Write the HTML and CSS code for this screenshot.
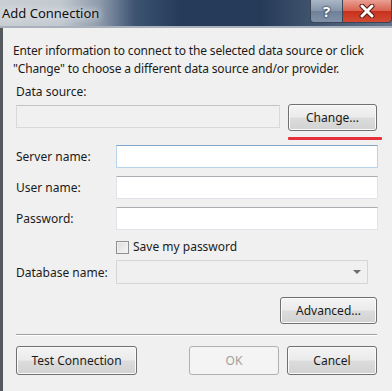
FILE: index.html
```html
<!DOCTYPE html>
<html>
   <head>
      <title>Add Connection</title>
      <link rel="stylesheet" href="styles.css">
   </head>
   <body>
      <div class="window">
         <div class="titlebar">
            <span class="title">Add Connection</span>
            <div class="caption-btns">
               <button class="cap-btn help">?</button>
               <button class="cap-btn close">
                  <svg width="16" height="14" viewBox="0 0 16 14">
                     <path d="M3 2 L13 12 M13 2 L3 12" stroke="#5a1a14" stroke-width="5" stroke-linecap="round"/>
                     <path d="M3 2 L13 12 M13 2 L3 12" stroke="#ffffff" stroke-width="3" stroke-linecap="round"/>
                  </svg>
               </button>
            </div>
         </div>
         <div class="content">
            <p class="intro">Enter information to connect to the selected data source or click "Change" to choose a different data source and/or provider.</p>
            <div class="label-top">Data source:</div>
            <div class="source-row">
               <div class="field readonly"></div>
               <div class="change-wrap">
                  <button class="btn change">Change...</button>
                  <div class="mark"></div>
               </div>
            </div>
            <div class="form-row first">
               <label>Server name:</label>
               <div class="field focused"></div>
            </div>
            <div class="form-row">
               <label>User name:</label>
               <div class="field"></div>
            </div>
            <div class="form-row">
               <label>Password:</label>
               <div class="field"></div>
            </div>
            <div class="check-row">
               <span class="checkbox"></span>
               <span>Save my password</span>
            </div>
            <div class="form-row db">
               <label>Database name:</label>
               <div class="combo">
                  <span class="arrow"></span>
               </div>
            </div>
            <div class="advanced-row">
               <button class="btn advanced">Advanced...</button>
            </div>
            <div class="separator"></div>
            <div class="footer">
               <button class="btn test">Test Connection</button>
               <div class="footer-right">
                  <button class="btn ok" disabled>OK</button>
                  <button class="btn cancel">Cancel</button>
               </div>
            </div>
         </div>
      </div>
   </body>
</html>
```

FILE: styles.css
```css
* {
   margin: 0;
   padding: 0;
   box-sizing: border-box;
   font-family: 'Noto Sans', 'Open Sans', sans-serif;
}
body {
   width: 392px;
   height: 391px;
   overflow: hidden;
   background: #f0f0f0;
   color: #1b1b1b;
   font-size: 12px;
}
.window {
   height: 391px;
   display: flex;
   flex-direction: column;
}
.titlebar {
   height: 28px;
   display: flex;
   justify-content: space-between;
   align-items: flex-start;
   background: linear-gradient(to right, #c9ced3 0, #c2c9d0 60px, #8d9aab 100px, #3d5372 135px, #263b5a 180px, #263b59 260px, #3a4e68 300px, #63748a 392px);
   border-bottom: 2px solid #a9b2bc;
}
.title {
   font-size: 13px;
   line-height: 26px;
   padding-left: 2px;
   color: #101010;
   text-shadow: 0 0 6px #e8ecf0, 0 0 10px #e8ecf0;
}
.caption-btns {
   display: flex;
}
.cap-btn {
   height: 23px;
   border: 1px solid #3a4656;
   border-top: none;
   cursor: pointer;
   display: flex;
   align-items: center;
   justify-content: center;
}
.cap-btn.help {
   width: 33px;
   border-radius: 0 0 0 4px;
   background: linear-gradient(#a9b6c5, #8595aa 50%, #6f8199 51%, #7f92a9);
   color: #ffffff;
   font-size: 15px;
   font-weight: bold;
   text-shadow: 0 0 2px #27384e, 0 0 2px #27384e;
}
.cap-btn.close {
   width: 49px;
   border-left: none;
   border-radius: 0 0 4px 0;
   background: linear-gradient(#e8a093, #d9604d 50%, #c7301c 51%, #d24b33);
}
.content {
   flex: 1;
   border-left: 3px solid #56595d;
   padding: 14px 14px 0 10px;
}
.intro {
   line-height: 18px;
   letter-spacing: -0.15px;
}
.label-top {
   margin-top: 5px;
   padding-left: 3px;
   line-height: 18px;
}
.source-row {
   display: flex;
   align-items: flex-start;
   margin-top: 3px;
   padding-left: 3px;
}
.field {
   height: 23px;
   background: #ffffff;
   border: 1px solid #e2e3ea;
   border-top-color: #abadb3;
}
.field.readonly {
   width: 264px;
   flex-shrink: 0;
   margin-top: 1px;
   background: #f0f0f0;
   border: 1px solid #d9d9d9;
   border-top-color: #c4c4c4;
}
.field.focused {
   border-color: #b7d4ec;
   border-top-color: #7fa6c9;
}
.change-wrap {
   margin-left: 8px;
   width: 94px;
   flex-shrink: 0;
   display: flex;
   flex-direction: column;
}
.btn {
   font-size: 12px;
   color: #1b1b1b;
   border: 1px solid #707070;
   border-radius: 3px;
   background: linear-gradient(#f4f4f4, #ebebeb 48%, #dcdcdc 52%, #d2d2d2);
   box-shadow: inset 0 0 0 1px #fbfbfb;
   cursor: pointer;
}
.btn.change {
   width: 89px;
   height: 27px;
}
.mark {
   height: 3px;
   margin-top: 6px;
   border-radius: 1px;
   background: #e8303a;
}
.form-row {
   display: flex;
   align-items: center;
   padding-left: 3px;
   margin-top: 8px;
}
.form-row.first {
   margin-top: 5px;
}
.form-row label {
   width: 100px;
}
.form-row .field {
   width: 262px;
}
.check-row {
   display: flex;
   align-items: center;
   gap: 4px;
   margin-top: 10px;
   padding-left: 103px;
   line-height: 14px;
}
.checkbox {
   width: 13px;
   height: 13px;
   border: 1px solid #8e8f8f;
   background: linear-gradient(135deg, #dcdcdc, #f6f6f6);
   box-shadow: inset 0 0 0 1px #f2f2f2;
}
.form-row.db {
   margin-top: 6px;
}
.combo {
   position: relative;
   width: 252px;
   height: 24px;
   background: #f0f0f0;
   border: 1px solid #d5d5d5;
}
.arrow {
   position: absolute;
   right: 6px;
   top: 9px;
   border-left: 4px solid transparent;
   border-right: 4px solid transparent;
   border-top: 4px solid #6d6d6d;
}
.advanced-row {
   display: flex;
   justify-content: flex-end;
   margin-top: 13px;
   padding-right: 1px;
}
.btn.advanced {
   width: 97px;
   height: 27px;
}
.separator {
   margin: 10px 1px 0 3px;
   border-top: 1px solid #a0a0a0;
   border-bottom: 1px solid #ffffff;
}
.footer {
   display: flex;
   justify-content: space-between;
   margin-top: 10px;
   padding: 0 1px 0 3px;
}
.footer-right {
   display: flex;
   gap: 8px;
}
.btn.test {
   width: 121px;
   height: 29px;
}
.btn.ok,
.btn.cancel {
   width: 90px;
   height: 29px;
}
.btn.ok {
   color: #a0a0a0;
   border-color: #adb2b5;
   background: #f4f4f4;
   box-shadow: none;
   cursor: default;
}
```
